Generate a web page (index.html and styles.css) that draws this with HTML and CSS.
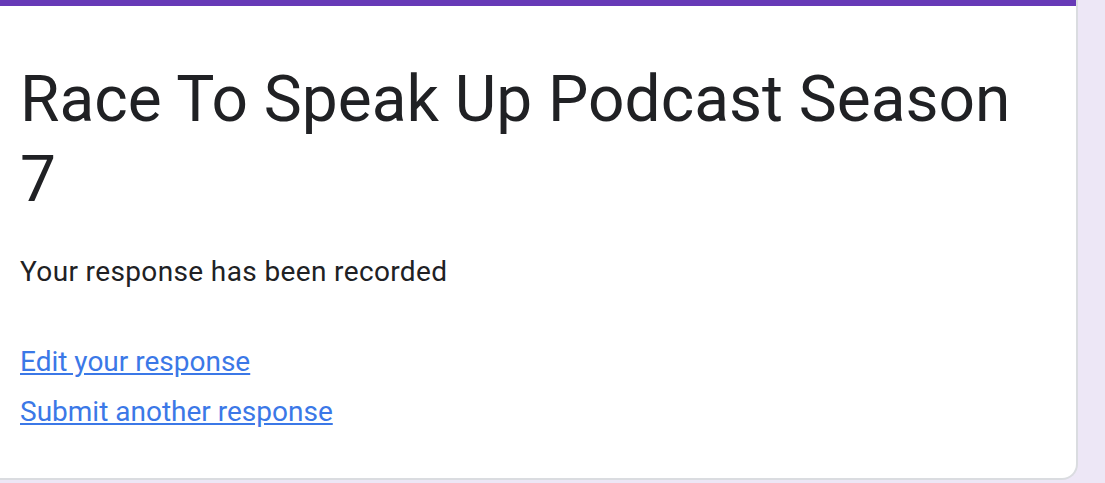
FILE: index.html
```html
<!DOCTYPE html>
<html>
<head>
<meta charset="utf-8">
<link rel="stylesheet" href="styles.css">
</head>
<body>
<div class="card">
  <div class="bar"></div>
  <div class="content">
    <h1 class="title">Race To Speak Up Podcast Season 7</h1>
    <p class="message">Your response has been recorded</p>
    <div class="links">
      <a class="link" href="#">Edit your response</a>
      <a class="link" href="#">Submit another response</a>
    </div>
  </div>
</div>
</body>
</html>
```
FILE: styles.css
```css
html, body {
  margin: 0;
  padding: 0;
  background: #ede7f6;
  height: 100%;
  overflow: hidden;
}
body {
  font-family: Roboto, "Liberation Sans", Arial, sans-serif;
  color: #202124;
}
.card {
  width: 1076px;
  background: #ffffff;
  border-right: 2px solid #dadce0;
  border-bottom: 2px solid #dadce0;
  border-bottom-right-radius: 16px;
}
.bar {
  height: 6px;
  background: #673ab7;
}
.content {
  padding: 54px 20px 46px 20px;
}
.title {
  margin: 0;
  font-size: 64px;
  font-weight: 400;
  line-height: 80px;
  width: 1000px;
}
.message {
  margin: 32px 0 0 0;
  font-size: 28px;
  line-height: 40px;
  letter-spacing: 0.37px;
}
.links {
  margin-top: 50px;
  display: flex;
  flex-direction: column;
  align-items: flex-start;
  gap: 10px;
}
.link {
  font-size: 28px;
  line-height: 40px;
  color: #3b78e7;
  text-decoration: underline;
}
```
